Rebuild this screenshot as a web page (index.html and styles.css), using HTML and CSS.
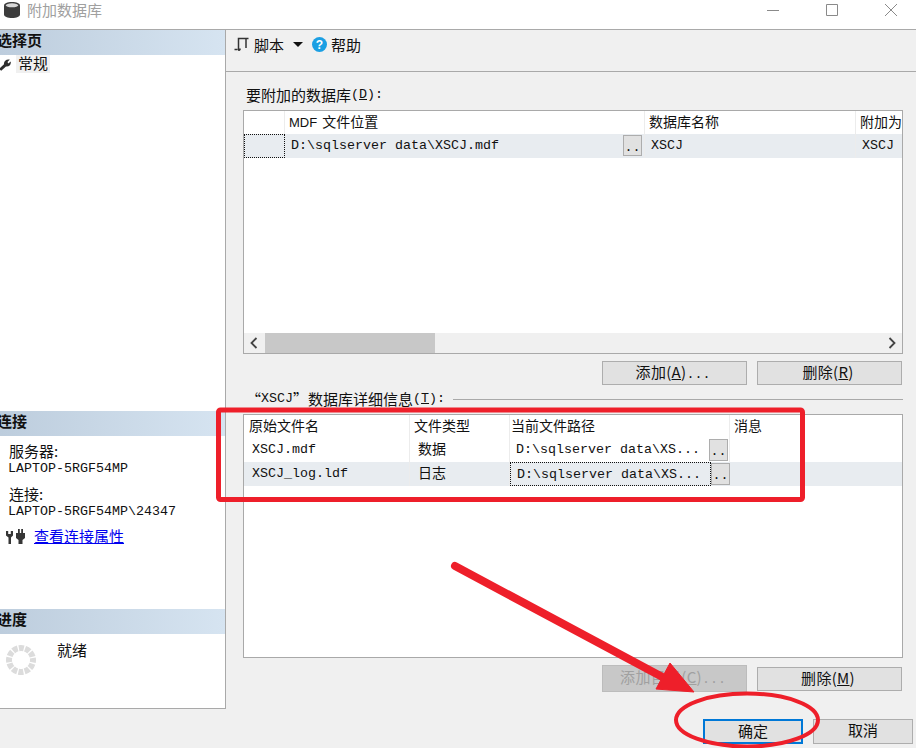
FILE: index.html
```html
<!DOCTYPE html>
<html lang="zh">
<head>
<meta charset="utf-8">
<title>附加数据库</title>
<link rel="stylesheet" href="styles.css">
</head>
<body>
<div class="app">
  <header class="titlebar">
    <svg class="dbicon" width="16" height="16" viewBox="0 0 16 16"><path d="M0 3.500C0 1.500 3.500 0 8 0s8 1.500 8 3.500v9C16 14.500 12.500 16 8 16s-8-1.500-8-3.500z" fill="#3c3c3c"/><ellipse cx="8" cy="3.300" rx="6.300" ry="2" fill="#d8d8d8"/></svg>
    <span class="z title">附加数据库</span>
    <div class="winctl">
      <svg width="14" height="14" viewBox="0 0 14 14"><path d="M1 7.500h12" stroke="#8a8a8a" fill="none"/></svg>
      <svg width="14" height="14" viewBox="0 0 14 14"><path d="M1.500 1.500h11v11h-11z" stroke="#8a8a8a" fill="none"/></svg>
      <svg width="14" height="14" viewBox="0 0 14 14"><path d="M1 1l12 12M13 1L1 13" stroke="#8a8a8a" fill="none"/></svg>
    </div>
  </header>

  <div class="main">
    <aside class="side">
      <section class="sec sec-pages">
        <h2 class="sechead"><span class="z b">选择页</span></h2>
        <div class="pageitem">
          <svg width="13" height="13" viewBox="0 0 13 13"><path d="M0 10.800L5 6.200C4.600 3.400 7 1 10.800 1.600L8.500 3.900 9.300 5.400 11.700 3.400C12.400 6.600 10 9 7 8.500L2.200 12.800z" fill="#2e2e2e"/></svg>
          <span class="z sel">常规</span>
        </div>
      </section>
      <section class="sec sec-conn">
        <h2 class="sechead"><span class="z b">连接</span></h2>
        <div class="conn">
          <div class="kv"><span class="z">服务器:</span><br>LAPTOP-5RGF54MP</div>
          <div class="kv"><span class="z">连接:</span><br>LAPTOP-5RGF54MP\24347</div>
          <div class="connlink">
            <svg width="19" height="15" viewBox="0 0 19 15"><path d="M0 2h2.200v3h2.600V2H7v4.500L5 8.500V15H2.500V8.500L0 6.500zM10 4h2V0h1.800v4h1.400V0H17v4h2v5l-2.500 2v4h-4v-4L10 9z" fill="#363636"/></svg>
            <a class="z link" href="#">查看连接属性</a>
          </div>
        </div>
      </section>
      <section class="sec sec-prog">
        <h2 class="sechead"><span class="z b">进度</span></h2>
        <div class="prog">
          <svg width="32" height="32" viewBox="0 0 32 32"><circle cx="16" cy="16" r="12" fill="none" stroke="#dcdcdc" stroke-width="6" stroke-dasharray="5 1.283" stroke-dashoffset="2.500"/></svg>
          <span class="z">就绪</span>
        </div>
      </section>
    </aside>

    <div class="pane">
      <div class="toolbar">
        <svg width="15" height="15" viewBox="0 0 15 15"><path d="M3.500 12.500h-3M12 1.500H4.500v11c0 1 1 1 1.500 0v-1M12 1.500h2.500M12 1.500V11" stroke="#333" stroke-width="1.500" fill="none"/></svg>
        <span class="z tb-script">脚本</span>
        <svg class="caret" width="10" height="5" viewBox="0 0 10 5"><path d="M0 0h10L5 5z" fill="#111"/></svg>
        <svg class="help" width="15" height="15" viewBox="0 0 15 15"><circle cx="7.500" cy="7.500" r="7.500" fill="#1b9fe3"/><text x="7.500" y="12" text-anchor="middle" class="helpq">?</text></svg>
        <span class="z">帮助</span>
      </div>

      <div class="content">
        <div class="label"><span class="z">要附加的数据库</span>(<u>D</u>):</div>
        <div class="grid g1">
          <div class="row head">
            <div class="cell c-sel"></div>
            <div class="cell c-mdf"><span class="sans">MDF</span> <span class="z">文件位置</span></div>
            <div class="cell c-name"><span class="z">数据库名称</span></div>
            <div class="cell c-as"><span class="z">附加为</span></div>
          </div>
          <div class="row alt">
            <div class="cell c-sel dotted"></div>
            <div class="cell c-mdf pad">D:\sqlserver data\XSCJ.mdf<button class="dots" type="button">..</button></div>
            <div class="cell c-name pad">XSCJ</div>
            <div class="cell c-as pad">XSCJ</div>
          </div>
          <div class="fill"></div>
          <div class="hscroll">
            <svg width="8" height="12" viewBox="0 0 8 12"><path d="M6.500 1L1.500 6l5 5" stroke="#444" stroke-width="1.800" fill="none"/></svg>
            <div class="track"><div class="thumb"></div></div>
            <svg width="8" height="12" viewBox="0 0 8 12"><path d="M1.500 1l5 5-5 5" stroke="#444" stroke-width="1.800" fill="none"/></svg>
          </div>
        </div>
        <div class="btnrow b1">
          <button class="btn" type="button"><span class="z">添加(<u>A</u>)</span>...</button>
          <button class="btn" type="button"><span class="z">删除(<u>R</u>)</span></button>
        </div>
        <div class="label l2"><span class="z">“</span>XSCJ<span class="z">”数据库详细信息</span>(<u>T</u>):<span class="rule"></span></div>
        <div class="grid g2">
          <div class="row head">
            <div class="cell d-name"><span class="z">原始文件名</span></div>
            <div class="cell d-type"><span class="z">文件类型</span></div>
            <div class="cell d-path"><span class="z">当前文件路径</span></div>
            <div class="cell d-msg"><span class="z">消息</span></div>
          </div>
          <div class="row plain">
            <div class="cell d-name pad2">XSCJ.mdf</div>
            <div class="cell d-type pad2"><span class="z">数据</span></div>
            <div class="cell d-path pad2">D:\sqlserver data\XS...<button class="dots" type="button">..</button></div>
            <div class="cell d-msg"></div>
          </div>
          <div class="row alt">
            <div class="cell d-name pad2">XSCJ_log.ldf</div>
            <div class="cell d-type pad2"><span class="z">日志</span></div>
            <div class="cell d-path pad2 focus">D:\sqlserver data\XS...<button class="dots" type="button">..</button></div>
            <div class="cell d-msg"></div>
          </div>
        </div>
        <div class="btnrow b2">
          <button class="btn off" type="button" disabled><span class="z">添加目录(<u>C</u>)</span>...</button>
          <button class="btn" type="button"><span class="z">删除(<u>M</u>)</span></button>
        </div>
        <div class="footer">
          <button class="fbtn primary" type="button"><span class="z">确定</span></button>
          <button class="fbtn" type="button"><span class="z">取消</span></button>
        </div>
      </div>
    </div>
  </div>

  <svg class="marks" width="916" height="748" viewBox="0 0 916 748">
    <rect x="218.500" y="410" width="584" height="89.500" rx="2" fill="none" stroke="#ee1f2a" stroke-width="5"/>
    <path d="M455 566L668 680" stroke="#ee1f2a" stroke-width="8" stroke-linecap="round" fill="none"/>
    <path d="M670 663L694 692 656 689z" fill="#ee1f2a" stroke="#ee1f2a" stroke-width="1"/>
    <ellipse cx="747" cy="720" rx="71" ry="26.500" fill="none" stroke="#ee1f2a" stroke-width="4"/>
  </svg>
</div>
</body>
</html>
```

FILE: styles.css
```css
* { box-sizing: border-box; }
html, body { margin: 0; padding: 0; }
body {
  width: 916px;
  height: 748px;
  overflow: hidden;
  background: #f0f0f0;
  color: #111;
  font: 13.33px/20px "Liberation Mono", "Noto Sans CJK SC", monospace;
}
.z { font-family: "Noto Sans CJK SC", sans-serif; font-size: 15px; line-height: 20px; }
.b { font-weight: 700; }
.sans { font-family: "Liberation Sans", sans-serif; font-size: 13px; margin-right: -3px; }
.app { position: relative; width: 916px; height: 748px; display: flex; flex-direction: column; }

.titlebar { height: 30px; background: #fff; border-bottom: 1px solid #a9a9a9; display: flex; align-items: center; padding-left: 4px; }
.dbicon { margin-top: -9px; }
.title { margin-left: 7px; margin-top: -9px; color: #a0a0a0; }
.winctl { margin-left: auto; margin-right: 18px; margin-top: -9px; display: flex; gap: 45px; }
.winctl svg { display: block; }

.main { flex: 1; display: flex; min-height: 0; }
.side { width: 226px; height: 679px; background: #fff; border-right: 1px solid #a9a9a9; border-bottom: 1px solid #a9a9a9; display: flex; flex-direction: column; }
.sec-pages { height: 381px; }
.sec-conn { height: 198px; }
.sec-prog { flex: 1; }
.sechead { margin: 0; height: 25px; background: linear-gradient(90deg, #bdcddd, #d6e4f1); font-size: 15px; font-weight: 700; line-height: 23px; text-indent: -3px; overflow: hidden; white-space: nowrap; }
.pageitem { display: flex; align-items: center; gap: 4px; height: 18px; }
.pageitem svg { margin-left: -1px; flex: none; }
.sel { display: block; height: 18px; background: #f0f0f0; padding: 0 2px; line-height: 16px; }

.conn { padding: 7px 0 0 8px; line-height: 15px; }
.kv { margin-bottom: 10px; line-height: 15px; }
.kv .z { line-height: 16px; margin-left: 1px; }
.connlink { display: flex; align-items: center; gap: 9px; margin-top: -3px; margin-left: -2px; }
.link { color: #0000ee; text-decoration: underline; }
.prog { display: flex; padding: 9px 0 0 5px; gap: 20px; }
.prog svg { margin-top: 1px; flex: none; }
.prog .z { margin-top: -3px; }

.pane { flex: 1; min-width: 0; display: flex; flex-direction: column; }
.toolbar { height: 42px; border-bottom: 1px solid #a9a9a9; display: flex; align-items: center; padding-left: 8px; padding-bottom: 12px; }
.tb-script { margin-left: 5px; }
.caret { margin-left: 9px; }
.help { margin-left: 9px; margin-right: 4px; }
.helpq { font: 700 12px "Liberation Sans", sans-serif; fill: #fff; }

.content { flex: 1; padding: 13px 13px 0 17px; }
.label { height: 20px; padding-left: 3px; display: flex; align-items: center; white-space: pre; }
.l2 { margin-top: 4px; }
.rule { flex: 1; height: 1px; background: #a9a9a9; margin-left: 8px; margin-right: 0; }
.grid { margin-top: 5px; height: 244px; width: 660px; background: #fff; border: 1px solid #a9a9a9; display: flex; flex-direction: column; }
.grid .z { font-size: 14px; }
.row { display: flex; height: 24px; flex: none; }
.head { height: 23px; background: #fff; }
.alt { background: #e8ecf0; }
.plain { background: #fff; }
.cell { position: relative; height: 100%; padding-left: 4px; border-right: 1px solid #ececec; white-space: nowrap; overflow: hidden; line-height: 22px; }
.c-sel { width: 41px; padding: 0; }
.c-mdf { width: 360px; }
.c-name { width: 211px; }
.c-as { flex: 1; border-right: 0; }
.d-name { width: 166px; }
.d-type { width: 100px; }
.d-path { width: 220px; }
.d-msg { flex: 1; border-right: 0; }
.pad { padding-left: 6px; line-height: 23px; }
.c-mdf.pad { padding-left: 6px; }
.c-name.pad { padding-left: 6px; }
.pad2 { padding-left: 8px; line-height: 23px; }
.d-path.pad2 { padding-left: 6px; }
.head .d-name { padding-left: 5px; }
.head .d-path { padding-left: 1px; }
.dotted, .focus { border: 1px dotted #111; }
.row.alt .focus { height: 24px; width: 201px; margin-right: 19px; overflow: visible; }
.dots { position: absolute; right: 1px; top: 1px; width: 19px; height: 22px; padding: 0; background: #e1e1e1; border: 1px solid #adadad; font: inherit; line-height: 24px; color: #111; text-align: center; }
.c-mdf .dots { right: 2px; top: 1px; height: 21px; }
.row.alt .focus .dots { right: -20px; top: 0; }
.fill { flex: 1; }
.hscroll { height: 20px; background: #f0f0f0; display: flex; align-items: center; justify-content: space-between; padding: 0 6px; }
.track { flex: 1; height: 100%; padding: 0 0 0 7px; }
.thumb { width: 170px; height: 100%; background: #c8c8c8; }

.btnrow { display: flex; justify-content: flex-end; gap: 10px; align-items: center; }
.b1 { margin-top: 7px; height: 24px; padding-right: 1px; }
.b2 { margin-top: 7px; height: 27px; padding-right: 1px; }
.btn { width: 145px; height: 24px; padding: 0 3px 0 0; background: #e1e1e1; border: 1px solid #adadad; color: #111; font: inherit; line-height: 20px; }
.btn .z { letter-spacing: .3px; }
.btn.off { height: 27px; background: #c8c8c8; border-color: #bcbcbc; color: #a0a0a0; }
.footer { display: flex; justify-content: flex-end; gap: 10px; margin-top: 27px; margin-right: -10px; }
.fbtn { width: 100px; height: 25px; padding: 0; background: #e1e1e1; border: 1px solid #adadad; color: #111; font: inherit; }
.primary { border: 2px solid #0078d7; }

.marks { position: absolute; left: 0; top: 0; pointer-events: none; }
```
